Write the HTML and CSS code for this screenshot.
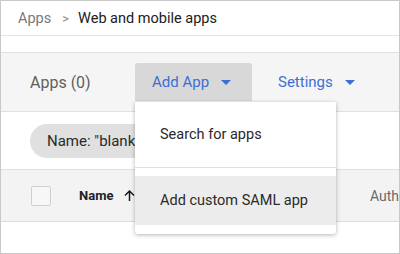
FILE: index.html
```html
<!DOCTYPE html>
<html lang="en">

<head>
    <meta charset="UTF-8">
    <title>Web and mobile apps</title>
    <link rel="stylesheet" href="styles.css">
</head>

<body>
    <div class="frame">
        <div class="breadcrumb">
            <span class="crumb">Apps</span>
            <span class="sep">&gt;</span>
            <span class="current">Web and mobile apps</span>
        </div>
        <div class="gap"></div>
        <div class="toolbar">
            <span class="title">Apps (0)</span>
            <div class="menu__wrap">
                <button class="btn btn--open">Add App <span class="caret"></span></button>
                <div class="menu">
                    <div class="menu__item">Search for apps</div>
                    <div class="menu__divider"></div>
                    <div class="menu__item menu__item--hover">Add custom SAML app</div>
                </div>
            </div>
            <button class="btn btn--settings">Settings <span class="caret"></span></button>
        </div>
        <div class="filters">
            <span class="chip">Name: "blank"</span>
        </div>
        <div class="table__head">
            <span class="checkbox"></span>
            <span class="col col--name">Name</span>
            <span class="arrow">
                <svg width="11" height="11" viewBox="0 0 11 11"><path d="M5.5 11V1.2M1 5.5L5.5 1 10 5.5" fill="none" stroke="#1a1a1a" stroke-width="1.5"/></svg>
            </span>
            <span class="col col--auth">Authentication</span>
        </div>
    </div>
</body>

</html>
```

FILE: styles.css
```css
* {
  margin: 0;
  padding: 0;
  box-sizing: border-box;
}

body {
  width: 400px;
  height: 254px;
  font-family: Roboto, 'Liberation Sans', sans-serif;
  background-color: #ffffff;
  overflow: hidden;
}

.frame {
  position: relative;
  width: 400px;
  height: 254px;
  border: 1px solid #c9c9c9;
  overflow: hidden;
}

.breadcrumb {
  height: 35px;
  display: flex;
  align-items: center;
  padding-left: 17px;
  border-bottom: 1px solid #e3e3e3;
  font-size: 14.5px;
}

.crumb {
  color: #7a7a7a;
}

.sep {
  color: #8a8a8a;
  font-size: 13px;
  margin: 0 9px 0 11px;
}

.current {
  color: #202020;
}

.gap {
  height: 16px;
}

.toolbar {
  height: 60px;
  display: flex;
  align-items: center;
  background-color: #f5f5f5;
  border-top: 1px solid #e0e0e0;
  border-bottom: 1px solid #e0e0e0;
  padding-left: 29px;
}

.title {
  font-size: 16px;
  color: #5f5f5f;
  width: 105px;
}

.menu__wrap {
  position: relative;
}

.btn {
  display: flex;
  align-items: center;
  height: 38px;
  border: none;
  background: transparent;
  font-family: inherit;
  font-size: 15px;
  color: #3d6ed6;
}

.btn--open {
  width: 117px;
  padding-left: 17px;
  background-color: #d8d8d8;
  border-radius: 3px 3px 0 0;
}

.btn--settings {
  margin-left: 9px;
  padding-left: 17px;
}

.caret {
  display: inline-block;
  width: 0;
  height: 0;
  margin-left: 12px;
  border-left: 5px solid transparent;
  border-right: 5px solid transparent;
  border-top: 5px solid #3d6ed6;
}

.menu {
  position: absolute;
  left: 0;
  top: 39px;
  width: 201px;
  height: 132px;
  background-color: #ffffff;
  box-shadow: 0 1px 4px rgba(0, 0, 0, 0.3);
  border-radius: 0 0 3px 3px;
  z-index: 2;
}

.menu__item {
  height: 65px;
  display: flex;
  align-items: center;
  padding-left: 25px;
  font-size: 14.5px;
  color: #2a2a2a;
}

.menu__divider {
  height: 1px;
  background-color: #e0e0e0;
}

.menu__item--hover {
  height: 49px;
  margin-top: 8px;
  background-color: #ececec;
}

.filters {
  height: 57px;
  display: flex;
  align-items: center;
  padding-left: 29px;
  padding-top: 1px;
}

.chip {
  height: 34px;
  display: flex;
  align-items: center;
  padding: 0 18px 0 17px;
  border-radius: 17px;
  background-color: #e0e0e0;
  font-size: 15px;
  color: #2a2a2a;
}

.table__head {
  height: 53px;
  display: flex;
  align-items: center;
  background-color: #f3f3f3;
  border-top: 1px solid #e0e0e0;
  border-bottom: 1px solid #dcdcdc;
  padding-left: 30px;
}

.checkbox {
  flex-shrink: 0;
  width: 20px;
  height: 20px;
  border: 1px solid #d0d0d0;
  border-radius: 2px;
  background-color: #f7f7f7;
}

.col--name {
  flex-shrink: 0;
  width: 45px;
  margin-left: 28px;
  font-size: 13px;
  font-weight: bold;
  color: #222222;
}

.arrow {
  flex-shrink: 0;
  display: flex;
  margin-top: -1px;
}

.col--auth {
  flex-shrink: 0;
  margin-left: 235px;
  font-size: 14px;
  color: #6a6a6a;
  white-space: nowrap;
}
```
